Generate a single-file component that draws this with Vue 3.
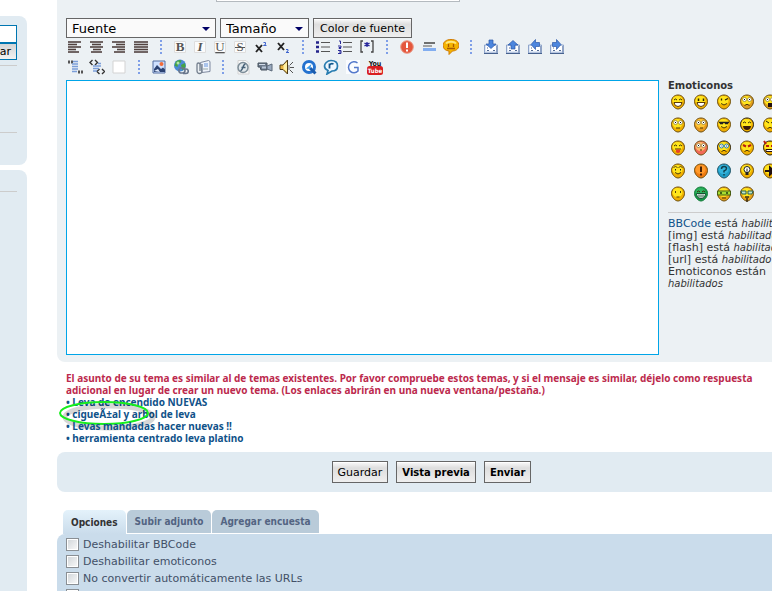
<template>
  <div class="page">
    <div class="sidebar">
      <form class="side-box search" @submit.prevent>
        <input v-model="search" type="text" class="search-input" aria-label="Buscar" />
        <button type="submit" class="search-btn">Buscar</button>
        <hr />
        <hr class="far" />
      </form>
      <div class="side-box rest">
        <hr />
      </div>
    </div>

    <div class="main">
      <div class="panel">
        <input v-model="subject" type="text" class="subject" aria-label="Asunto" />
        <div class="format-row">
          <span class="select-wrap font">
            <select v-model="font" aria-label="Fuente"><option>Fuente</option></select>
          </span>
          <span class="select-wrap size">
            <select v-model="size" aria-label="Tamaño"><option>Tamaño</option></select>
          </span>
          <button type="button" class="btn color-btn">Color de fuente</button>
        </div>
        <div class="editor">
          <div class="editor-left">
            <div v-for="(row, r) in toolbar" :key="r" class="toolbar">
              <template v-for="(name, i) in row" :key="i">
                <span v-if="name === '|'" class="sep"></span>
                <button v-else type="button" class="tool" :class="{ narrow: narrow.includes(name) }" :aria-label="name">
                  <svg width="16" height="16" viewBox="0 0 16 16" v-html="icons[name]"></svg>
                </button>
              </template>
            </div>
            <textarea v-model="message" aria-label="Mensaje"></textarea>
          </div>
          <div class="aside">
            <strong>Emoticonos</strong>
            <div class="smileys">
              <a v-for="(s, i) in smileys" :key="i" href="#" aria-label="emoticono" @click.prevent>
                <svg width="16" height="16" viewBox="0 0 16 16">
                  <path d="M8 1C12 1 14.5 4 14.5 7.5C14.5 11 11 15 8 15C5 15 1.5 11 1.5 7.5C1.5 4 4 1 8 1Z" :fill="s.low || '#f0b000'" :stroke="s.line || '#6b4c08'" />
                  <ellipse cx="7.5" cy="6.5" rx="5" ry="4.5" :fill="s.fill || '#ffe51c'" />
                  <g v-html="s.face"></g>
                </svg>
              </a>
            </div>
            <hr />
            <p>
              <a href="#">BBCode</a> está <em>habilitado</em><br />
              [img] está <em>habilitado</em><br />
              [flash] está <em>habilitado</em><br />
              [url] está <em>habilitado</em><br />
              Emoticonos están<br /><em>habilitados</em>
            </p>
          </div>
        </div>
      </div>

      <div class="similar">
        <p>El asunto de su tema es similar al de temas existentes. Por favor compruebe estos temas, y si el mensaje es similar, déjelo como respuesta adicional en lugar de crear un nuevo tema. (Los enlaces abrirán en una nueva ventana/pestaña.)</p>
        <ul>
          <li v-for="(t, i) in topics" :key="t">
            <a href="#">• {{ t }}</a>
            <svg v-if="i === 1" class="mark" width="100" height="36" viewBox="0 0 100 36">
              <ellipse cx="53" cy="21" rx="44" ry="11" fill="none" stroke="#000" stroke-opacity=".16" stroke-width="5" />
              <ellipse cx="48" cy="17" rx="44" ry="11" fill="none" stroke="#16ee1c" stroke-width="2" />
            </svg>
          </li>
        </ul>
      </div>

      <div class="submit">
        <button type="button" class="btn">Guardar</button>
        <button type="button" class="btn bold">Vista previa</button>
        <button type="button" class="btn bold">Enviar</button>
      </div>

      <div class="tabs">
        <button v-for="(t, i) in tabs" :key="t" type="button" :class="{ active: tab === i }" @click="tab = i">{{ t }}</button>
      </div>
      <div class="options">
        <label v-for="o in options" :key="o.text"><input v-model="o.on" type="checkbox" /> {{ o.text }}</label>
      </div>
    </div>
  </div>
</template>

<script setup>
import { ref } from 'vue';

const search = ref('');
const subject = ref('');
const font = ref('Fuente');
const size = ref('Tamaño');
const message = ref('');
const tab = ref(0);

const tabs = ['Opciones', 'Subir adjunto', 'Agregar encuesta'];
const topics = [
  'Leva de encendido NUEVAS',
  'cigueÃ±al y arbol de leva',
  'Levas mandadas hacer nuevas !!',
  'herramienta centrado leva platino',
];
const options = ref([
  { text: 'Deshabilitar BBCode', on: false },
  { text: 'Deshabilitar emoticonos', on: false },
  { text: 'No convertir automáticamente las URLs', on: false },
  { text: 'Adjuntar firma (la firma puede ser modificada desde el panel de control)', on: false },
]);

const toolbar = [
  ['left', 'center', 'right', 'justify', '|', 'bold', 'italic', 'underline', 'strike', 'sup', 'sub', '|', 'ul', 'ol', 'item', '|', 'alert', 'line', 'bubble', '|', 'down', 'up', 'prev', 'next'],
  ['quote', 'code', 'blank', '|', 'image', 'link', 'attach', '|', 'flash', 'video', 'sound', 'quicktime', 'real', 'google', 'youtube'],
];
const narrow = ['bold', 'italic', 'underline', 'strike'];

// four or five text lines, each given as [x, width]
const lines = (rows) => rows.map(([x, w], i) => `<path d="M${x} ${3 + i * 2.5}h${w}" stroke="#51423f" stroke-width="1.6"/>`).join('');
const letter = (inner) => `<path d="M2.5 2.5h11v11h-11z" fill="#fbfbfb" stroke="#dedede"/>${inner}`;
const glyph = (c, extra = '') => `<text x="8" y="12" text-anchor="middle" font-family="Liberation Serif, serif" font-size="13" fill="#555" ${extra}>${c}</text>`;
// mail tray with a blue arrow turned by the given angle
const tray = (deg) => `<path d="M1.500 6h13v8h-13z" fill="#dfe8f5" stroke="#8fa5cb"/><path d="M3 7h10v5H3z" fill="#fff"/><path d="M1 14.500h14" stroke="#47628f"/><path d="M4 9h1M4 11.500h2M10 11.500h2" stroke="#536b94"/><path d="M14 7v7" stroke="#8fa3c5" stroke-width="2"/><path d="M6 1h4v4h3L8 9.500 3 5h3z" fill="#4c86de" stroke="#2b58a8" stroke-width=".7" transform="rotate(${deg} 8 5.500)"/>`;

const icons = {
  left: lines([[1, 13], [1, 9], [1, 13], [1, 8], [1, 11]]),
  center: lines([[1, 13], [3, 9], [1, 13], [4, 8], [2, 11]]),
  right: lines([[1, 13], [5, 9], [1, 13], [6, 8], [3, 11]]),
  justify: lines([[1, 14], [1, 14], [1, 14], [1, 14], [1, 14]]),
  bold: letter(glyph('B', 'font-weight="bold"')),
  italic: letter(glyph('I', 'font-style="italic" font-weight="bold"')),
  underline: letter(glyph('U', 'text-decoration="underline"')),
  strike: letter(glyph('S') + '<path d="M3 8.500h10" stroke="#555"/>'),
  sup: '<path d="M3 6l6 7M9 6l-6 7" stroke="#222" stroke-width="1.900"/><path d="M10.500 3.500h2v2l-2 1h3" fill="none" stroke="#3d63cd"/>',
  sub: '<path d="M3 4l6 7M9 4l-6 7" stroke="#222" stroke-width="1.900"/><path d="M11 10.500h2v1.500l-2 1.500h3" fill="none" stroke="#3d63cd"/>',
  ul: '<path d="M1 3.500h3M1 8h3M1 12.500h3" stroke="#23238a" stroke-width="2.500"/><path d="M6 3.500h9M6 8h9M6 12.500h9" stroke="#555"/>',
  ol: '<path d="M2 2h1.500v3M1 7h3v1.500H2v1h2M1 11.500h3v3H1M2 13h2" fill="none" stroke="#2a2a99"/><path d="M6 3.500h9M6 8h9M6 12.500h9" stroke="#555"/>',
  item: '<path d="M4 2H2v11h2M12 2h2v11h-2" fill="none" stroke="#444" stroke-width="1.300"/><path d="M8 3v5M5.500 4.200l5 2.600M10.500 4.200l-5 2.600" stroke="#26269c" stroke-width="1.300"/>',
  alert: '<circle cx="8" cy="8" r="6.300" fill="#e4573d" stroke="#eb9b88"/><path d="M8 3.500v5.500M8 10.500v2" stroke="#fff" stroke-width="2"/>',
  line: '<path d="M3 4h11" stroke="#444" stroke-width="1.500"/><path d="M2 7h9" stroke="#888" stroke-width="1.500"/><path d="M2 10.500h13" stroke="#82aef0" stroke-width="3"/>',
  bubble: '<path d="M8 .500c5 0 7.800 2 7.800 6S12 12 9.500 12L6 15.500V12C2.500 11.500.200 10 .200 6.500S3 .500 8 .500z" fill="#f5b400" stroke="#d07c05"/><path d="M3 4.500c2-2.500 8-2.500 10 0" fill="none" stroke="#ffe980" stroke-width="2"/><path d="M5.500 5v3M10.500 5v3M4 9.500h8" stroke="#a85a00" stroke-width="1.300"/>',
  down: tray(0),
  up: tray(180),
  prev: tray(90),
  next: tray(-90),
  quote: '<path d="M1 3h2M4 3h2M11 13h2M14 13h2" stroke="#555" stroke-width="3"/><path d="M6 2.500h5M5 5h6M5 7.500h6M5 10h6M5 12.500h5" stroke="#7b9ed9" stroke-width="1.300"/>',
  code: '<path d="M3.500 1L1 3.500 3.500 6M6 1l2.500 2.500L6 6M10.500 10L8 12.500 10.500 15M13 10l2.500 2.500L13 15" fill="none" stroke="#333" stroke-width="1.400"/><path d="M9 4.500h3M4 7h8M4 9.500h6M4 12h4" stroke="#7b9ed9" stroke-width="1.300"/>',
  blank: '<path d="M2 2h12v12H2z" fill="#fff" stroke="#d3d3d3"/>',
  image: '<path d="M2 2h12v12H2z" fill="#cfe1ff" stroke="#536da0"/><path d="M3 13V10l3-4 4 4 2-1.500 2 2V13z" fill="#2b4272"/><circle cx="10.500" cy="5" r="2" fill="#f16b3a"/><path d="M3 12l4-2 2 3z" fill="#e3edff"/>',
  link: '<circle cx="7" cy="6.500" r="6" fill="#4a8ad4"/><path d="M3 2.500Q6 0 8.500 1.500L7.500 4 5 5 4.500 8 1.500 6.500zM8 6l4-2 .500 4-3 3.500z" fill="#45a443"/><circle cx="5" cy="4" r="1.500" fill="#b2e5a7"/><path d="M6.500 9h3a2.500 2.500 0 010 5h-2a2.500 2.500 0 01-1-4M11 10h2a2 2 0 010 4.500h-3" fill="none" stroke="#68768c" stroke-width="1.600"/>',
  attach: '<path d="M5.500 3.500l8-2 1.500 1v10l-8 1z" fill="#eef3fb" stroke="#7f8a9f"/><path d="M9 4h4v4H9z" fill="#aac4ec"/><path d="M8 10h5" stroke="#9aa"/><path d="M7 5v7a2 2 0 01-5 0V5.500a1.500 1.500 0 013 0V12" fill="none" stroke="#75808f" stroke-width="1.300"/>',
  flash: '<path d="M3 1.500h8l3 3V15H3z" fill="#f9f9f9" stroke="#d4d4d4"/><circle cx="8" cy="8.500" r="5" fill="#e1e8ec" stroke="#7d8d98" stroke-width="1.500"/><path d="M10.500 5c-3 0-2 6-5 7M6.500 8.500h4" fill="none" stroke="#455f75" stroke-width="1.400"/>',
  video: '<path d="M1 4h9v7H4L3 8H1z" fill="#6e7c8d" stroke="#47535f"/><path d="M10 7l5-2v7l-5-2z" fill="#9babc0" stroke="#5c6a7b"/><path d="M2 5.500h6" stroke="#d2dce8"/><path d="M5 8.500h4" stroke="#b9c6d6" stroke-width="2"/>',
  sound: '<path d="M1 6h3l4.500-5v14L4 10.500H1z" fill="#e9b440" stroke="#4e3a13"/><path d="M4.500 6L8 3v10l-3.500-3z" fill="#fff0a3"/><path d="M11 6l3-3M11 8.500h4M11 11l3 3" stroke="#555"/><path d="M10 6v5" stroke="#777"/>',
  quicktime: '<circle cx="8" cy="8" r="5.500" fill="#fff" stroke="#2472cf" stroke-width="3"/><path d="M9 9l5.500 5.500" stroke="#1b5cae" stroke-width="3"/><path d="M5 9.500L10.500 5 9 10z" fill="#3b9ae9"/>',
  real: '<path d="M8 1.500c4 0 6.500 2 6.500 5.500S12 12 9 12l-5 3 1-3.500C2.500 10.500 1.500 9 1.500 7S4 1.500 8 1.500z" fill="#edf7ff" stroke="#287cb0" stroke-width="1.700"/><path d="M6.500 9.500V4.500M6.500 6q1.500-2 4-1" fill="none" stroke="#12588c" stroke-width="1.800"/>',
  google: '<path d="M1 1h14v14H1z" fill="#fafcff"/><path d="M12.500 4A5.500 5.500 0 1013 12V8.500H9" fill="none" stroke="#5479cb" stroke-width="1.500"/>',
  youtube: '<rect y="7" width="16" height="9" rx="2.500" fill="#d91e20"/><text x="8" y="6.500" text-anchor="middle" font-family="DejaVu Sans Condensed, sans-serif" font-weight="bold" font-size="7" fill="#111">You</text><text x="8" y="14" text-anchor="middle" font-family="DejaVu Sans Condensed, sans-serif" font-weight="bold" font-size="6" fill="#fff">Tube</text>',
};

const eyes = '<path d="M5.500 4.500v2.500M10.500 4.500v2.500" stroke="#2d2102" stroke-width="1.500"/>';
const wide = '<circle cx="5.500" cy="5.500" r="2" fill="#fff" stroke="#8a7a33" stroke-width=".7"/><circle cx="10.500" cy="5.500" r="2" fill="#fff" stroke="#8a7a33" stroke-width=".7"/><path d="M5 5.500h1M10 5.500h1" stroke="#111"/>';
const arcs = '<path d="M4 6q1.500-2 3 0M9 6q1.500-2 3 0" fill="none" stroke="#3a2b05"/>';
const shades = '<path d="M3 5.500h10M4 6.500h3M9 6.500h3" stroke="#222" stroke-width="1.300"/>';
const smile = '<path d="M5 9.500q3 3 6 0" fill="none" stroke="#4a3505"/>';
const frown = '<path d="M5.500 11.500q2.500-2.500 5 0" fill="none" stroke="#4a3505"/>';
const teeth = '<path d="M4 8.500h8q-.5 4-4 4t-4-4z" fill="#fff" stroke="#5b3b08"/>';
const open = '<path d="M4 9h8q-.5 4-4 4t-4-4z" fill="#391a0b"/>';
const tongue = '<path d="M5 9h6" stroke="#4a3505"/><path d="M6 9.500h4v2.500q-2 2-4 0z" fill="#e64329"/>';

const smileys = [
  { face: arcs + teeth },
  { face: eyes + teeth },
  { face: '<path d="M5.500 4.500v2M9 6l3-1.500" stroke="#2d2102" stroke-width="1.300"/>' + smile },
  { face: wide + frown, low: '#df9b20' },
  { face: wide + '<path d="M6 9h4v4H6z" fill="#211"/>', low: '#dda020' },
  { face: wide + '<path d="M6 11h4" stroke="#4a3505"/>' },
  { face: wide + '<path d="M7 11h3" stroke="#4a3505"/>', fill: '#ffc735', low: '#e89a20' },
  { face: shades + smile },
  { face: arcs + open, line: '#201804' },
  { face: '<path d="M4 4l3 2M12 4L9 6" stroke="#2d2102"/>' + frown },
  { face: arcs + tongue },
  { face: wide + '<path d="M7 10h2" stroke="#4a3505"/>', fill: '#ffb86b', low: '#f16a58' },
  { face: '<circle cx="5.500" cy="6" r="2" fill="#fff" stroke="#3185ad"/><circle cx="10.500" cy="6" r="2" fill="#fff" stroke="#3185ad"/><path d="M5.500 6h.8M10 6h.8" stroke="#111"/>' + frown, line: '#201804' },
  { face: '<path d="M4 5l3 1.500M12 5L9 6.500" stroke="#b71c12" stroke-width="2"/>' + frown },
  { face: '<path d="M2 1l2 3M14 1l-2 3" stroke="#b71c12" stroke-width="2"/><path d="M4 6h3M9 6h3" stroke="#b71c12" stroke-width="2"/><path d="M4 9.500h8v2H4z" fill="#fff" stroke="#211"/>', line: '#201804' },
  { face: '<path d="M3.500 4.500q2-2 4 0M8.500 4.500q2-2 4 0" fill="none" stroke="#5b450a"/><path d="M5.500 6v1.500M10.500 6v1.500" stroke="#222"/>' + smile },
  { face: '<path d="M8 3.500v5.500M8 10.500v2" stroke="#4a2106" stroke-width="2"/>', fill: '#ff9a2b', low: '#ee7b12' },
  { face: '<path d="M5.500 6q0-2.500 2.500-2.500t2.500 2q0 1.500-2.500 2.500v1.500M8 11v1.500" fill="none" stroke="#10414f" stroke-width="1.500"/>', fill: '#35b4dc', low: '#1f9cc6', line: '#1d5163' },
  { face: '<circle cx="8" cy="6.500" r="3" fill="#fff" stroke="#222"/><path d="M6.500 9h3v3h-3z" fill="#222"/><path d="M8 5.500v3" stroke="#222"/>' },
  { face: '<path d="M3 8h6M8 4.500L12 8l-4 3.500z" fill="#211" stroke="#211" stroke-width="2"/>' },
  { face: '<path d="M5.500 5v2M10.500 5v2M6.500 11h3" stroke="#5a4508"/>' },
  { face: arcs + '<path d="M3.500 7.500h9q0 5-4.500 5t-4.500-5z" fill="#fff" stroke="#115230"/><path d="M6 8v4M8 8v4M10 8v4M4 10h8" stroke="#115230" stroke-width=".6"/>', fill: '#2eb35f', low: '#159947', line: '#137c39' },
  { face: '<path d="M1.500 5h13v4h-13z" fill="#a6dd31" stroke="#475f13"/><path d="M4 7h2M10 7h2" stroke="#223d0c" stroke-width="1.500"/><path d="M6 12h4" stroke="#4a3505"/>', low: '#e8a118' },
  { face: '<path d="M2 5h5v3H3zM9 5h5l-1 3H9z" fill="#bfe5c8" stroke="#285f51"/><path d="M6 11h4M8 12v4" stroke="#3b2c12" stroke-width="1.500"/>', low: '#e8a118' },
];
</script>

<style>
body {
  margin: 0;
  background: #fff;
}
</style>

<style scoped>
.page {
  display: flex;
  gap: 30px;
  height: 100vh;
  overflow: hidden;
  font-family: "DejaVu Sans", Verdana, sans-serif;
  font-size: 11px;
  color: #333;
}

* {
  box-sizing: border-box;
}

button,
input,
select,
textarea {
  font-family: inherit;
  margin: 0;
}

a {
  color: #105289;
  text-decoration: none;
}

hr {
  width: 100%;
  margin: 0;
  border: 0;
  border-top: 1px solid #ccc;
}

/* the left column runs off the edge of the window */
.sidebar {
  display: flex;
  flex-direction: column;
  gap: 5px;
  flex: 0 0 150px;
  margin-left: -123px;
  padding-top: 16px;
}

.side-box {
  display: flex;
  flex-direction: column;
  align-items: flex-end;
  padding: 9px 10px 32px;
  border-radius: 8px;
  background: #e1ebf2;
}

.side-box.rest {
  flex: 1;
  padding-top: 21px;
  border-radius: 8px 8px 0 0;
}

.search-input {
  width: 100%;
  height: 18px;
  border: 1px solid #0076b1;
  background: #fff;
}

.search-btn {
  height: 17px;
  margin-bottom: 5px;
  padding: 0 5px;
  border: 1px solid #0076b1;
  background: linear-gradient(#d5d5d5, #f2f2f2);
  color: #000;
  font-size: 11px;
  line-height: 15px;
}

.side-box .far {
  margin-top: 66px;
}

.main {
  flex: 1 0 0;
  min-width: 0;
  margin-right: -34px;
}

.panel {
  margin-top: -20px;
  padding: 0 9px 7px;
  border-radius: 0 0 8px 8px;
  background: #ecf1f4;
}

.subject {
  display: block;
  width: 244px;
  height: 22px;
  margin: 0 0 16px 150px;
  border: 1px solid #b4babf;
  background: #fff;
}

.format-row {
  display: flex;
  gap: 4px;
}

.select-wrap {
  position: relative;
}

.select-wrap::after {
  content: "";
  position: absolute;
  right: 6px;
  top: 9px;
  border: 4px solid transparent;
  border-top-color: #000066;
  pointer-events: none;
}

.font {
  width: 150px;
}

.size {
  width: 89px;
}

select {
  display: block;
  width: 100%;
  height: 20px;
  padding: 0 5px;
  border: 1px solid #666;
  border-radius: 0;
  background: #fafafa;
  appearance: none;
  color: #000;
  font-size: 13px;
}

.btn {
  height: 22px;
  padding: 0 5px;
  border: 1px solid #666;
  background: linear-gradient(#fafafa, #dedede 30%, #efefef);
  box-shadow: inset 0 1px #fff;
  color: #000;
  font-size: 11px;
}

.color-btn {
  height: 20px;
  padding: 0 6px;
}

.btn.bold {
  font-size: 10px;
  font-weight: bold;
}

.editor {
  display: flex;
  gap: 9px;
  margin-top: -1px;
}

.editor-left {
  flex: 1;
  min-width: 0;
}

.toolbar {
  display: flex;
  gap: 2px;
  height: 20px;
  margin-left: -1px;
}

.tool {
  display: flex;
  align-items: center;
  justify-content: center;
  width: 20px;
  height: 20px;
  padding: 0;
  border: 0;
  background: none;
}

.tool.narrow {
  width: 18px;
}

.sep {
  width: 16px;
  height: 14px;
  margin-top: 3px;
  background: repeating-linear-gradient(#7f9fe8 0 2px, transparent 2px 4px) center / 2px 14px no-repeat;
}

textarea {
  display: block;
  width: 100%;
  height: 275px;
  margin-top: 3px;
  border: 1px solid #00a5e8;
  background: #fff;
  resize: none;
  outline: none;
}

.aside {
  flex: 0 0 129px;
  padding-top: 43px;
  line-height: 12px;
  white-space: nowrap;
}

.aside strong {
  display: block;
  font-size: 10px;
}

.aside em {
  font-size: 10px;
}

.aside p {
  margin: 5px 0 0;
}

.smileys {
  display: grid;
  grid-template-columns: repeat(5, 20px);
  gap: 3px;
  margin-bottom: 8px;
}

.smileys a {
  display: flex;
  align-items: center;
  justify-content: center;
  height: 20px;
}

.similar {
  padding: 10px 9px 8px;
  font-family: "Noto Sans", "DejaVu Sans Condensed", sans-serif;
  font-size: 10px;
  font-weight: bold;
  line-height: 12px;
}

.similar p {
  margin: 0;
  color: #bc2a4d;
}

.similar ul {
  margin: 0;
  padding: 0;
  list-style: none;
}

.similar li {
  position: relative;
}

.mark {
  position: absolute;
  left: -10px;
  top: -12px;
  pointer-events: none;
}

.submit {
  display: flex;
  align-items: center;
  justify-content: center;
  gap: 8px;
  height: 40px;
  border-radius: 8px;
  background: #e1ebf2;
}

.tabs {
  display: flex;
  align-items: flex-start;
  gap: 1px;
  margin-top: 18px;
  padding-left: 6px;
}

.tabs button {
  height: 23px;
  padding: 0 8px;
  border: 0;
  border-radius: 5px 5px 0 0;
  background: #b9cbd9;
  color: #536482;
  font-family: "DejaVu Sans Condensed", "DejaVu Sans", sans-serif;
  font-size: 10px;
  font-weight: bold;
}

.tabs button.active {
  height: 24px;
  background: linear-gradient(#e4f2fb, #cadceb);
  color: #333;
}

.options {
  padding: 2px 9px 40px;
  border-radius: 8px;
  background: #cadceb;
  color: #425067;
}

.options label {
  display: flex;
  align-items: center;
  gap: 4px;
  height: 17px;
}

.options input {
  width: 13px;
  height: 13px;
  border: 1px solid #8a8f94;
  background: linear-gradient(135deg, #cfd4d8, #fafafa);
  box-shadow: inset 0 0 0 1px #fff;
  appearance: none;
}

.options input:checked {
  background: #105289;
}
</style>
